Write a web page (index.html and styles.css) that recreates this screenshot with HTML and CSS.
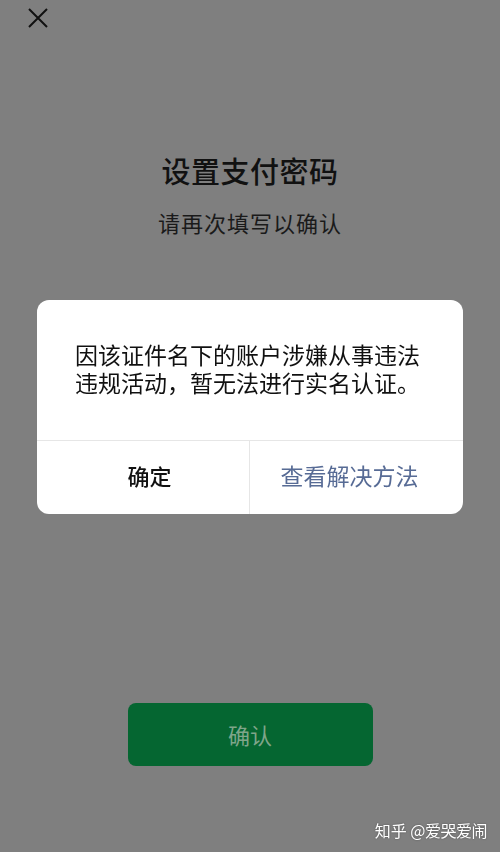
FILE: index.html
```html
<!DOCTYPE html>
<html lang="zh-CN">
<head>
    <meta charset="UTF-8">
    <meta name="viewport" content="width=device-width, initial-scale=1.0">
    <title>设置支付密码</title>
    <link rel="stylesheet" href="styles.css">
</head>
<body>
    <div class="page">
        <div class="top-bar">
            <svg class="close-icon" width="20" height="20" viewBox="0 0 20 20">
                <path d="M1 1 L19 19 M19 1 L1 19" stroke="#111" stroke-width="2" fill="none"/>
            </svg>
        </div>
        <h1 class="title">设置支付密码</h1>
        <p class="subtitle">请再次填写以确认</p>
        <button class="confirm-btn">确认</button>
    </div>

    <!-- dialog over the dimmed page -->
    <div class="overlay">
        <div class="dialog">
            <div class="dialog-body">因该证件名下的账户涉嫌从事违法违规活动，暂无法进行实名认证。</div>
            <div class="dialog-actions">
                <div class="action action-ok">确定</div>
                <div class="action action-link">查看解决方法</div>
            </div>
        </div>
    </div>

    <div class="watermark">知乎 <span class="handle">@爱哭爱闹</span></div>
</body>
</html>
```

FILE: styles.css
```css
body {
    margin: 0;
    padding: 0;
    background-color: #7f7f7f;
    font-family: "Noto Sans CJK SC", "Noto Sans", sans-serif;
    color: #111;
}
.page {
    height: 852px;
    display: flex;
    flex-direction: column;
    align-items: center;
    padding-bottom: 86px;
    box-sizing: border-box;
}
.top-bar {
    align-self: stretch;
    padding: 8px 0 0 28px;
    height: 20px;
}
.close-icon {
    display: block;
}
.title {
    margin: 122px 0 0;
    font-size: 29px;
    font-weight: 500;
    line-height: 40px;
    letter-spacing: 0.5px;
}
.subtitle {
    margin: 17px 0 0;
    font-size: 22px;
    line-height: 30px;
    color: #1a1a1a;
    letter-spacing: 1px;
}
.confirm-btn {
    margin-top: auto;
    width: 245px;
    height: 63px;
    padding-bottom: 3px;
    border: none;
    border-radius: 8px;
    background-color: #056631;
    color: #7fa58a;
    font-family: inherit;
    font-size: 22px;
}
.overlay {
    position: fixed;
    top: 0;
    left: 0;
    right: 0;
    bottom: 0;
    display: flex;
    justify-content: center;
    align-items: flex-start;
    padding-top: 300px;
}
.dialog {
    width: 426px;
    background-color: #fff;
    border-radius: 12px;
    overflow: hidden;
}
.dialog-body {
    padding: 40px 36px 44px 38px;
    font-size: 23px;
    line-height: 28px;
    color: #111;
}
.dialog-actions {
    display: flex;
    border-top: 1px solid #e6e6e6;
    height: 73px;
}
.action {
    flex: 1;
    display: flex;
    align-items: center;
    justify-content: center;
    padding-bottom: 5px;
    box-sizing: border-box;
    font-size: 22px;
    font-weight: 500;
    color: #111;
}
.action-ok {
    padding-left: 13px;
}
.action-link {
    border-left: 1px solid #e6e6e6;
    padding-right: 14px;
    color: #576b95;
    font-weight: 400;
    font-size: 23px;
}
.watermark {
    position: fixed;
    right: 13px;
    bottom: 10px;
    font-size: 16px;
    color: #fff;
    text-shadow: 0 0 2px rgba(0, 0, 0, 0.4);
}
.handle {
    letter-spacing: -0.5px;
}
```
